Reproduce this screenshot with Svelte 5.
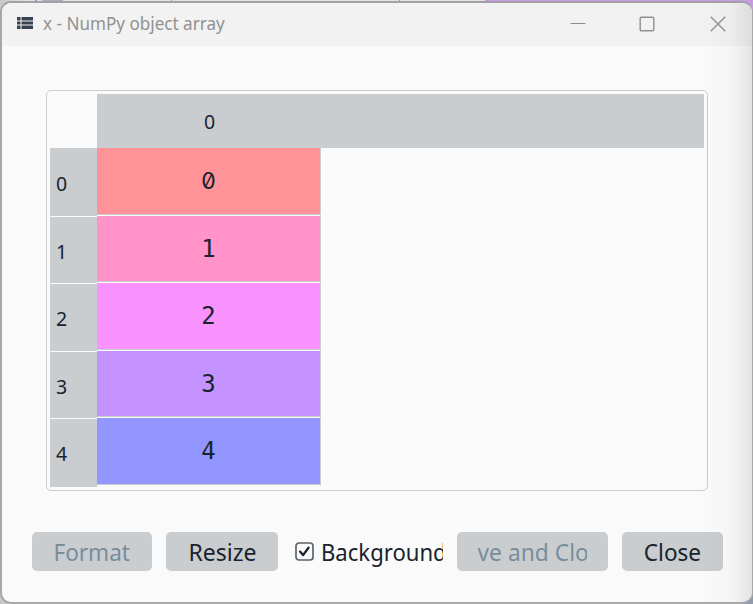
<script>
  const rows = [
    { value: 0, color: '#ff9398', head: 69, cell: 68 },
    { value: 1, color: '#ff93ca', head: 67, cell: 67 },
    { value: 2, color: '#fa93ff', head: 68, cell: 68 },
    { value: 3, color: '#c493ff', head: 67, cell: 67 },
    { value: 4, color: '#9396ff', head: 68, cell: 68 }
  ];
</script>

<div class="desktop">
  <div class="backdrop"><i class="tab"></i><i class="tick"></i><i class="tick second"></i><i class="tick third"></i><i class="purple"></i></div>
  <section class="window">
    <header>
      <svg class="list" width="16" height="12" viewBox="0 0 16 12">
        <path fill="#374151" d="M0 0h3.5v3.4H0zM4.5 0H16v3.4H4.5zM0 4.4h3.5v3.2H0zM4.5 4.4H16v3.2H4.5zM0 8.6h3.5V12H0zM4.5 8.6H16V12H4.5z" />
      </svg>
      <h1>x - NumPy object array</h1>
      <div class="controls">
        <svg width="16" height="16" viewBox="0 0 16 16"><path d="M.5 7.5h15" /></svg>
        <svg width="16" height="16" viewBox="0 0 16 16"><rect x="1.2" y="1.2" width="13.6" height="13.6" rx="1.2" stroke-width="1.4" /></svg>
        <svg width="16" height="16" viewBox="0 0 16 16"><path stroke-width="1.3" d="M.7.7l14.6 14.6M15.3.7L.7 15.3" /></svg>
      </div>
    </header>
    <main>
      <div class="frame">
        <div class="columns"><span>0</span></div>
        <div class="body">
          <div class="index">
            {#each rows as row}
              <div class="label" style:height="{row.head}px"><span>{row.value}</span></div>
            {/each}
          </div>
          <div class="data">
            {#each rows as row}
              <div class="cell" style:height="{row.cell}px" style:background={row.color}>
                <span class:zero={row.value === 0}>{row.value}</span>
              </div>
            {/each}
          </div>
        </div>
      </div>
    </main>
    <footer>
      <button class="format" disabled><span>Format</span></button>
      <button class="resize"><span>Resize</span></button>
      <label>
        <svg width="19" height="19" viewBox="0 0 19 19">
          <rect x="1" y="1" width="17" height="17" rx="3" fill="#fafafa" stroke="#5c636c" stroke-width="1.7" />
          <path d="M5 9.6l3.1 3.5 5.4-7.4" fill="none" stroke="#19232d" stroke-width="2.3" stroke-linecap="round" stroke-linejoin="round" />
        </svg>
        <div class="caption"><span>Background</span></div>
      </label>
      <button class="save" disabled><div class="clip"><span>Save and Close</span></div></button>
      <button class="close"><span>Close</span></button>
    </footer>
  </section>
</div>

<style>
  .desktop {
    position: relative;
    box-sizing: border-box;
    width: 753px;
    height: 604px;
    padding: 1px 0 0;
    overflow: hidden;
    background: linear-gradient(90deg, #c8c8c8 50%, #8d9aa8);
    font-family: "Noto Sans", "Open Sans", sans-serif;
    color: #19232d;
  }
  .backdrop {
    position: absolute;
    inset: 0 0 auto;
    height: 20px;
    background: linear-gradient(90deg, #c8c8c8, #e3e3e3 30px);
  }
  .backdrop i { position: absolute; top: 0; height: 3px; }
  .tab { left: 42px; width: 21px; background: #a9b0b5; }
  .tick { left: 35px; width: 2px; background: #999; }
  .second { left: 171px; width: 1px; }
  .third { left: 399px; width: 1px; }
  .backdrop .purple { left: 485px; right: 0; height: 16px; background: #c99be4; }
  .window {
    position: relative;
    box-sizing: border-box;
    width: 753px;
    height: 603px;
    border: 2px solid #a8a8a8;
    border-right-width: 1px;
    border-top-color: #a5a0a8;
    border-radius: 11px;
    overflow: hidden;
    background: #fafafa;
  }
  .window::after {
    content: "";
    position: absolute;
    inset: 0 0 0 auto;
    width: 52px;
    background: linear-gradient(90deg, transparent, rgba(0, 0, 0, .018) 60%, rgba(0, 0, 0, .09));
    pointer-events: none;
  }
  header {
    display: flex;
    height: 43px;
    box-sizing: border-box;
    padding: 0 26px 0 15px;
    background: #f2f2f2;
  }
  .list { margin-top: 14px; }
  h1 {
    margin: 8px 0 0 10px;
    font-size: 17.5px;
    line-height: 24px;
    font-weight: 400;
    color: #919191;
    white-space: nowrap;
    transform: scaleX(.976);
    transform-origin: 0 0;
  }
  .controls {
    display: flex;
    gap: 54px;
    margin: 13px 0 0 auto;
    fill: none;
    stroke: #8e8e8e;
  }
  .controls svg:nth-child(2) { margin: 0 1px 0 -1px; }
  main { padding: 44px 0 0 44px; }
  .frame {
    box-sizing: border-box;
    width: 662px;
    height: 401px;
    padding: 3px;
    border: 1.4px solid #c9cdd0;
    border-radius: 5px;
  }
  .columns {
    width: 607px;
    height: 54px;
    margin-left: 47px;
    background: #c9cdd0;
    text-align: left;
    font-size: 19.5px;
    line-height: 56px;
  }
  .columns span { margin-left: 107px; }
  .body { display: flex; }
  .index { width: 47px; }
  .label {
    box-sizing: border-box;
    padding: 8px 0 0 6px;
    border-bottom: 1px solid #fafafa;
    background: #c9cdd0;
    font-size: 19.5px;
    line-height: 56px;
  }
  .label + .label { padding-top: 7px; }
  .label:last-child { border: 0; }
  .data { width: 224px; }
  .cell {
    box-sizing: border-box;
    border-right: 1px solid #c9cdd0;
    border-bottom: 1px solid #fafafa;
    box-shadow: inset 0 -1px #c9cdd0;
    font: 24px/66px "DejaVu Sans Mono", monospace;
    text-align: center;
  }
  .zero {
    display: inline-block;
    font-family: Inter, sans-serif;
    font-feature-settings: "zero" 1;
    font-size: 23px;
    line-height: 64px;
  }
  footer {
    display: flex;
    padding: 41px 0 0 30px;
    font-size: 24px;
  }
  button {
    height: 39px;
    padding: 0;
    border: 0;
    border-radius: 5px;
    background: #c9cdd0;
    color: #19232d;
    font: inherit;
    line-height: 39px;
    text-align: center;
  }
  button:disabled { color: #788d9c; }
  button span, .caption span { display: inline-block; white-space: nowrap; transform: scaleX(.94); }
  .resize span { transform: scaleX(.96); }
  .format { width: 120px; margin-right: 14px; }
  .resize { width: 112px; margin-right: 17px; }
  label { display: flex; width: 148px; margin-right: 14px; }
  label svg { margin-top: 10px; }
  .caption { width: 122px; margin-left: 7px; overflow: hidden; line-height: 39px; }
  .caption span { transform: scaleX(.92); transform-origin: 0 0; }
  .save { width: 151px; margin-right: 14px; }
  .clip { display: flex; justify-content: center; width: 109px; margin: 0 auto; overflow: hidden; }
  .clip span { flex: none; transform: scaleX(.95); }
  .close { width: 101px; }
</style>
